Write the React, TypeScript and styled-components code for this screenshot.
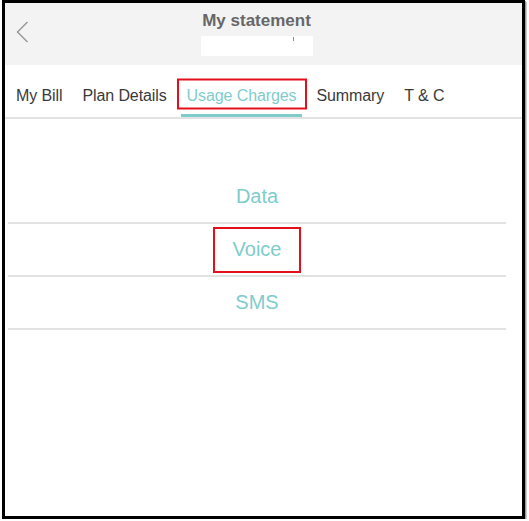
import * as React from "react";
import styled, { createGlobalStyle } from "styled-components";

const TEAL = "#7fcccc";
const MARK = "#e3101c";

const GlobalStyle = createGlobalStyle`
  html, body {
    margin: 0;
    padding: 0;
    background: #ffffff;
    font-family: "Liberation Sans", Arial, Helvetica, sans-serif;
  }
`;

const Frame = styled.div`
  box-sizing: border-box;
  width: 523px;
  height: 519px;
  margin-left: 2px;
  border: 3px solid #000;
  box-shadow: 1px 1px 0 #9a9a9a, 2px 2px 0 #cfcfcf;
  display: flex;
  flex-direction: column;
  background: #fff;
  overflow: hidden;
`;

const Header = styled.header`
  display: grid;
  grid-template-columns: 48px 1fr 48px;
  height: 62px;
  padding: 0 17px 0 3px;
  background: #f3f3f3;
`;

const BackButton = styled.button`
  align-self: start;
  justify-self: start;
  margin: 18px 0 0 8px;
  padding: 0;
  border: none;
  background: none;
  line-height: 0;
  cursor: pointer;
`;

const TitleBlock = styled.div`
  display: flex;
  flex-direction: column;
  align-items: center;
  padding-top: 8px;
`;

const Title = styled.h1`
  margin: 0;
  font-size: 17px;
  line-height: 20px;
  font-weight: bold;
  color: #676767;
`;

const Redacted = styled.div`
  position: relative;
  width: 112px;
  height: 20px;
  margin-top: 5px;
  background: #ffffff;
  &::after {
    content: "";
    position: absolute;
    left: 92px;
    top: 1px;
    width: 1px;
    height: 4px;
    background: #8a8a8a;
  }
`;

const TabBar = styled.nav`
  display: flex;
  gap: 8px;
  padding: 0 5px;
  border-bottom: 2px solid #e2e2e2;
`;

const Tab = styled.div<{ $active?: boolean }>`
  padding: 22px 6px 9px;
  font-size: 16px;
  line-height: 18px;
  letter-spacing: -0.1px;
  white-space: nowrap;
  color: ${(p) => (p.$active ? TEAL : "#3a3a3a")};
  border-bottom: 3px solid ${(p) => (p.$active ? TEAL : "transparent")};
`;

const Marked = styled.span<{ $w: number; $h: number; $dx?: number; $dy?: number }>`
  position: relative;
  &::after {
    content: "";
    position: absolute;
    left: 50%;
    top: 50%;
    width: ${(p) => p.$w}px;
    height: ${(p) => p.$h}px;
    box-sizing: border-box;
    transform: translate(
      calc(-50% + ${(p) => p.$dx ?? 0}px),
      calc(-50% + ${(p) => p.$dy ?? 0}px)
    );
    border: 2px solid ${MARK};
    pointer-events: none;
  }
`;

const List = styled.ul`
  list-style: none;
  margin: 52px 16px 0 3px;
  padding: 0;
`;

const Row = styled.li`
  display: flex;
  align-items: center;
  justify-content: center;
  height: 51px;
  border-bottom: 2px solid #e2e2e2;
  font-size: 20px;
  color: ${TEAL};
`;

const BackIcon = () => (
  <svg width="13" height="22" viewBox="0 0 13 22">
    <polyline
      points="11.5,1 1.5,11 11.5,21"
      fill="none"
      stroke="#9a9a9a"
      strokeWidth="1.5"
    />
  </svg>
);

const tabs = ["My Bill", "Plan Details", "Usage Charges", "Summary", "T & C"];
const usage = ["Data", "Voice", "SMS"];

export default function App() {
  return (
    <>
      <GlobalStyle />
      <Frame>
        <Header>
          <BackButton aria-label="Back">
            <BackIcon />
          </BackButton>
          <TitleBlock>
            <Title>My statement</Title>
            <Redacted />
          </TitleBlock>
          <div />
        </Header>
        <TabBar>
          {tabs.map((t) =>
            t === "Usage Charges" ? (
              <Tab key={t} $active>
                <Marked $w={130} $h={31} $dx={0} $dy={-2}>
                  {t}
                </Marked>
              </Tab>
            ) : (
              <Tab key={t}>{t}</Tab>
            )
          )}
        </TabBar>
        <List>
          {usage.map((u) => (
            <Row key={u}>
              {u === "Voice" ? (
                <Marked $w={88} $h={46} $dx={0} $dy={0}>
                  {u}
                </Marked>
              ) : (
                u
              )}
            </Row>
          ))}
        </List>
      </Frame>
    </>
  );
}
